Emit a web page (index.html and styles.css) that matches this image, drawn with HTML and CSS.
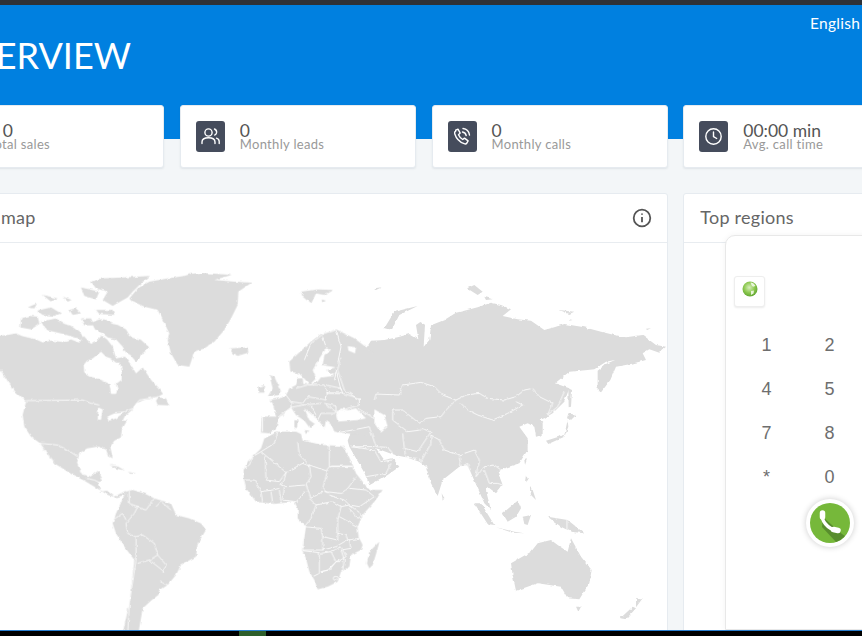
FILE: index.html
```html
<!DOCTYPE html>
<html lang="en">
<head>
<meta charset="utf-8">
<title>Overview</title>
<link rel="stylesheet" href="styles.css">
</head>
<body>
<div class="app">
  <div class="topbar"></div>
  <main class="main">
    <header class="hero">
      <h1 class="title">OVERVIEW</h1>
      <span class="lang">English</span>
    </header>
    <div class="grid">
      <section class="stat">
        <span class="tile"></span>
        <div class="stat-text"><div class="value">$ 0</div><div class="label">Total sales</div></div>
      </section>
      <section class="stat">
        <span class="tile"><svg class="ico" viewBox="0 0 29 31"><circle cx="12.5" cy="11.5" r="3.6"/><path d="M6 22.500v-1.500c0-2.800 2.500-4.200 6.500-4.200s6.500 1.400 6.500 4.200v1.500"/><path d="M18.500 8c1.800.8 2.300 2.200 2.100 3.700-.2 1.200-.9 2-1.900 2.400"/><path d="M20.500 17.200c1.700.6 2.700 1.800 2.700 3.300v2"/></svg></span>
        <div class="stat-text"><div class="value">0</div><div class="label">Monthly leads</div></div>
      </section>
      <section class="stat">
        <span class="tile"><svg class="ico" viewBox="0 0 29 31"><path d="M7.700 9.200l2.300-1 2.200 3.900-1.700 1.600c.8 2 2.300 3.700 4.200 4.800l1.800-1.400 3.600 2.800-1.200 2.100c-.6.900-1.700 1.100-2.700.7-4.600-1.700-8-5.200-9.500-10-.4-1.200 0-2 1-2.500z"/><path d="M14.500 11c2 .3 3.300 1.600 3.700 3.600"/><path d="M15 7.500c3.400.4 6 2.900 6.500 6.500"/></svg></span>
        <div class="stat-text"><div class="value">0</div><div class="label">Monthly calls</div></div>
      </section>
      <section class="stat">
        <span class="tile"><svg class="ico" viewBox="0 0 29 31"><circle cx="14.500" cy="15.500" r="7.700"/><path d="M14.500 11v4.700l3.200 1.800"/></svg></span>
        <div class="stat-text"><div class="value">00:00 min</div><div class="label">Avg. call time</div></div>
      </section>

      <section class="panel panel-wide">
        <div class="panel-head"><h2 class="panel-title">Traffic map</h2>
          <svg class="info" viewBox="0 0 20 20"><circle cx="10" cy="10" r="8.300"/><path d="M10 9v5.200"/><path d="M10 5.600v1.200"/></svg>
        </div>
        <svg class="map" viewBox="-216 729 2214 1161" aria-label="World map">
          <defs>
            <filter id="rough" x="-2%" y="-2%" width="104%" height="104%" filterUnits="objectBoundingBox">
              <feTurbulence type="fractalNoise" baseFrequency="0.07" numOctaves="2" seed="4" result="n"/>
              <feDisplacementMap in="SourceGraphic" in2="n" scale="9" xChannelSelector="R" yChannelSelector="G"/>
              <feGaussianBlur stdDeviation="0.9"/>
            </filter>
          </defs>
          <g filter="url(#rough)">
          <g class="land">
            <!-- North Atlantic and the Americas -->
            <g transform="translate(0 750)">
              <path d="M-10 258L20 255 45 250 62 258 80 262 105 268 125 277 150 272 185 276 210 268 235 278 248 258 270 282 288 272 302 256 318 268 335 290 345 325 372 320 390 345 405 370 425 352 440 375 452 392 472 412 486 432 462 445 430 450 405 460 395 478 372 498 365 512 378 512 362 540 360 562 340 572 328 590 335 625 322 618 315 598 290 590 258 595 235 610 228 640 242 672 268 680 292 662 305 690 290 700 300 725 318 722 340 740 375 722 372 735 345 742 320 735 300 722 250 692 210 672 185 655 160 640 130 600 118 580 90 560 70 530 65 495 75 455 45 430 20 395 0 365 -10 360z"/>
              <path d="M118 578L140 610 165 640 150 625 125 590z" class="sea"/>
              <path d="M248 345L258 332 275 325 300 305 315 320 330 325 345 338 357 338 362 360 362 390 345 402 350 418 345 432 330 432 325 402 305 392 290 385 265 380 250 370z" class="sea"/>
              <path d="M292 472L305 478 300 510 290 508zM318 500L340 490 368 488 345 505 325 512z" class="sea"/>
              <path d="M272 218L295 208 310 208 335 222 350 225 375 238 385 255 395 264 420 270 445 292 425 310 418 322 405 335 388 315 375 308 365 290 345 268 320 262 305 250 282 238z"/>
              <path d="M120 215L165 205 190 222 208 226 240 250 248 270 222 262 180 250 135 240z"/>
              <path d="M240 205L270 205 280 226 250 226z"/>
              <path d="M270 95L300 85 370 82 447 78 420 100 395 125 380 142 335 168 305 150 320 125 285 115z"/>
              <path d="M240 112L295 125 285 148 250 138z"/>
              <path d="M285 180L335 180 340 195 295 192z"/>
              <path d="M108 182L150 172 180 190 160 198 125 195z"/>
              <path d="M60 205L85 198 110 200 115 222 90 238 58 232z"/>
              <path d="M80 172L108 160 100 175zM205 180L225 175 240 190 215 195zM125 135L170 145 150 155zM185 140L212 150 200 155z"/>
              <path d="M385 145L410 115 445 95 500 85 550 78 570 72 600 68 692 75 640 90 700 95 752 98 712 125 710 165 700 185 690 205 670 240 640 275 610 295 580 305 565 350 530 345 510 310 500 270 505 250 495 230 470 180 430 170 390 152z"/>
              <path d="M685 295L740 292 742 308 710 318 695 310z"/>
              <path d="M900 125L950 118 995 120 970 135 945 130 930 162 905 140zM962 148L975 152 965 157z"/>
              <path d="M472 442L495 445 505 466 470 465 465 452z"/>
              <path d="M325 645L352 650 372 662 345 655zM380 665L405 670 392 672z"/>
              <path d="M335 820L345 790 375 725 395 720 430 730 460 745 510 760 525 795 565 805 600 820 615 840 590 880 585 920 540 945 525 975 500 1005 475 1022 472 1035 450 1052 425 1075 412 1150 365 1150 385 1060 400 930 370 890 345 850z"/>
            </g>
            <!-- Asia and Oceania -->
            <g transform="translate(990 750)">
              <path d="M10 340L40 262 65 265 90 290 60 312 90 315 110 288 120 272 160 270 200 262 235 252 262 268 255 225 268 216 282 224 278 290 295 270 300 226 340 210 375 188 400 182 440 172 480 158 510 165 540 178 515 198 560 208 600 212 640 240 670 232 700 222 760 232 810 245 850 255 885 262 935 255 975 285 1005 290 985 308 955 298 935 310 945 330 900 342 855 350 838 390 808 430 800 420 800 362 825 342 852 330 825 335 790 358 770 360 715 365 672 400 715 415 700 455 665 490 640 505 625 510 635 520 635 555 615 560 610 530 590 520 565 530 590 565 590 600 565 640 520 655 500 665 515 705 495 730 470 710 465 722 480 780 460 760 445 725 425 680 408 645 385 650 335 690 320 738 300 700 285 650 265 635 225 622 190 615 150 600 135 595 160 630 185 625 205 650 170 675 115 706 100 668 55 590 50 572 60 545 20 548 0 525 10 500 10 400z"/>
              <path d="M160 235L190 185 260 168 205 195 182 240zM408 115L430 105 455 125 440 135zM460 140L485 148 465 150zM685 180L730 185 715 192zM715 208L725 210 715 212zM130 115L152 112 135 120zM945 236L960 235 948 240z"/>
              <path d="M712 415L723 420 720 470 713 472zM712 490L735 495 720 510 708 505zM645 572L700 555 710 510 712 530 700 560 652 582zM622 540L634 540 630 560 620 555z"/>
              <path d="M332 730L340 745 335 752z"/>
              <path d="M430 760L450 760 490 825 470 822zM495 832L550 845 580 850 545 848zM515 790L560 752 570 775 555 800 530 815zM575 800L600 795 590 825 580 822zM650 800L710 810 760 850 720 845 690 830zM585 675L592 690 582 695zM596 710L605 720 615 750 600 735zM580 630L588 628 582 645z"/>
              <path d="M540 940L600 905 620 880 660 870 680 885 710 905 720 865 750 920 782 960 775 1000 745 1048 710 1045 690 1010 620 1000 555 1022 545 975z"/>
              <path d="M735 1070L750 1070 742 1085zM868 1105L905 1070 915 1075 885 1108zM915 1045L935 1045 915 1072z"/>
            </g>
            <!-- Europe -->
            <g transform="translate(720 960)">
              <path d="M145 125L210 65 240 42 285 28 340 55 400 100 400 345 335 342 280 335 272 315 255 300 250 325 235 305 225 295 190 265 205 300 222 312 205 322 190 302 165 285 150 262 125 285 115 290 105 325 85 340 60 338 62 290 105 290 95 250 85 240 115 235 135 225 145 205 165 195 170 175 185 175 187 192 205 192 180 165 170 160 148 155z"/>
              <path d="M85 165L100 170 120 215 115 225 80 230 95 205zM52 200L72 195 70 218 52 218zM160 300L170 302 168 325 160 322zM190 330L205 332 195 342z"/>
              <path d="M205 195L225 175 215 150 235 115 255 85 270 90 250 105 245 135 285 142 255 150 280 168 240 172 230 185z" class="sea"/>
              <path d="M285 285L300 265 320 270 345 265 375 295 350 300 290 305z" class="sea"/>
              <path d="M320 78L345 82 342 100 322 92z" class="sea"/>
            </g>
            <g transform="translate(990 750)"><path d="M130 478L160 495 170 530 150 548 130 520z" class="sea"/></g>
            <!-- Africa -->
            <g transform="translate(720 1290)">
              <path d="M8 120L20 95 60 55 70 25 110 5 165 5 180 12 185 32 215 38 240 45 300 48 312 55 335 105 345 130 375 168 390 180 425 180 400 215 365 255 350 290 355 325 365 345 360 360 330 375 325 410 300 425 290 455 260 470 230 478 220 450 205 425 195 385 183 360 190 320 195 290 170 265 170 235 160 215 100 222 65 218 45 215 15 175 8 145z"/>
              <path d="M415 335L410 355 395 405 385 415 378 400 385 365z"/>
            </g>
          </g>
          <g class="borders">
            <g transform="translate(0 750)">
              <path d="M0 362L20 395 45 430 75 455M75 452L245 450 270 460 295 465M320 510L350 495 395 475 415 450 445 445 470 440M115 580L170 585 200 600 230 620M255 685L280 690 300 700"/>
              <path d="M385 725L385 760 410 770 400 790 375 820M400 770L435 780 460 745M465 770L480 755 510 780M375 820L380 850 405 860 425 855 460 880 470 915 495 945 485 970M405 860L405 930 385 1060 380 1150M335 810L365 790 375 810M410 940L445 930 470 915M445 930L490 965M475 995L500 1005"/>
            </g>
            <g transform="translate(990 750)">
              <path d="M85 450L40 420 30 390 20 360 30 320M130 450L135 432 205 435 215 405 270 397 310 410 335 435 375 450 405 435 445 430 470 445 520 450 555 440 580 420 605 415 625 440 665 460 650 495 680 470 700 425M390 460L410 480 440 495 485 510 530 490 575 465 555 455M375 450L345 480 330 500 285 505 265 520M185 480L215 480 240 500 265 520M185 480L185 510 230 545 270 540M215 550L220 595 260 605 300 545 270 535M115 530L135 590 170 592 190 615M225 622L220 595M225 622L260 625 270 635 300 580 300 555 325 570 340 600 385 615 430 600 445 630M385 620L390 650 410 640 420 680M445 630L435 680 460 650 490 645 510 660M460 660L475 700 500 700 515 705M115 530L65 540 20 548M130 590L100 590 60 590M60 590L130 600 150 635 185 630M105 680L165 670 180 640M0 648L65 648M708 810L708 845"/>
            </g>
            <g transform="translate(720 960)">
              <path d="M190 120L210 70 250 40 285 30M245 50L255 80M285 30L300 80 290 130M245 170L285 160 280 180M285 150L300 210M200 195L250 195 260 215 255 240 200 230M165 205L200 195M200 230L185 250 150 245M135 225L150 245 150 265M65 290L65 335M255 195L300 205 305 220 255 218M260 220L305 220 355 235 355 255 320 265 285 275 255 255M250 250L285 258 285 280 240 280M185 255L240 250M240 280L230 300 200 270M210 258L225 285M350 265L400 295M150 262L185 255M115 288L148 264"/>
            </g>
            <g transform="translate(720 1290)">
              <path d="M60 65L100 40 110 5M60 65L35 80 25 105 10 115M72 80L75 150 115 155 135 127M60 65L135 127 185 100 205 108M170 35L175 75 205 105M205 105L255 122 265 110 265 45M265 110L335 110M260 120L245 175 260 190M205 105L210 140 195 165 205 190 210 205 245 185M135 127L130 150 120 165 135 170 190 165M130 170L125 210 165 215 195 185M10 150L40 150 60 185 95 180 115 175M60 185L65 218M90 185L95 220M115 180L120 215M250 185L300 190 320 175 335 155 345 140M265 195L310 210 325 225M325 175L375 180 400 200 355 230 325 225M205 205L225 225 275 215 300 230M225 225L210 265 190 290 240 295 245 320 290 330 290 270 300 230M300 230L325 225 365 255 350 265 325 235M295 260L350 290 355 325 320 330 315 315 290 310M190 290L185 360 245 360 245 320M245 360L285 350 310 335 325 330M325 330L330 355 300 360 310 390 305 420M185 362L235 368 235 430 215 440M240 370L270 365 285 395 260 420 240 425M270 365L300 350 315 380 285 395M240 425L265 420 285 395 305 395"/>
              <circle cx="283" cy="445" r="6"/>
            </g>
          </g>
          </g>
        </svg>
      </section>
      <section class="panel">
        <div class="panel-head"><h2 class="panel-title">Top regions</h2></div>
      </section>
    </div>
  </main>
  <div class="taskbar"><span class="task-item"></span></div>

  <aside class="dialer">
    <button class="globe-btn" type="button">
      <svg class="globe" viewBox="0 0 16 16"><defs><radialGradient id="gl" cx="45%" cy="40%" r="65%"><stop offset="0" stop-color="#d8eebc"/><stop offset=".55" stop-color="#8cc84f"/><stop offset="1" stop-color="#5aa02c"/></radialGradient></defs><circle cx="8" cy="8" r="7.500" fill="url(#gl)"/><path d="M8.500 1.500c2.500.2 4 1.500 5 3.500l-2.500.8-1.500-1.500zM9 10l3-.5-.5 3-2.500 1.500z" fill="#e9f5da"/></svg>
    </button>
    <div class="keys">
      <span class="key">1</span><span class="key">2</span><span class="key">3</span>
      <span class="key">4</span><span class="key">5</span><span class="key">6</span>
      <span class="key">7</span><span class="key">8</span><span class="key">9</span>
      <span class="key">*</span><span class="key">0</span><span class="key">#</span>
    </div>
    <button class="call" type="button">
      <svg class="call-ico" viewBox="0 0 40 40"><circle cx="20" cy="20" r="20" fill="#76b83a"/><path d="M13 14L32 31 35 33A20 20 0 0 1 26 39L12 24z" fill="#4f7f2a" opacity=".75"/><path d="M12.500 11C11 17 17 26 27 27.500" fill="none" stroke="#fff" stroke-width="3.400" stroke-linecap="round"/><path d="M12.500 10v4M23.500 26.500l4.500 1" fill="none" stroke="#fff" stroke-width="5.500" stroke-linecap="round"/></svg>
    </button>
  </aside>
</div>
</body>
</html>
```
FILE: styles.css
```css
* { box-sizing: border-box; }
html, body { margin: 0; height: 100%; overflow: hidden; }
body { background: #f3f6f8; font-family: "Lato", "Open Sans", sans-serif; color: #555; }
.app { position: relative; width: 862px; height: 636px; display: flex; flex-direction: column; overflow: hidden; }
.topbar { height: 5px; flex: none; background: #2f3237; }
.main { flex: 1; min-height: 0; overflow: hidden; background: #f3f6f8; }
.hero { height: 134px; background: #0080e0; color: #fff; position: relative; }
.title { margin: 0; position: absolute; right: 731px; top: 28px; font-size: 36px; line-height: 44px; font-weight: 400; white-space: nowrap; }
.lang { position: absolute; left: 810px; top: 9px; font-size: 15.500px; line-height: 18px; letter-spacing: .3px; }
.grid { position: relative; margin: -34px 0 0 -72px; display: grid; grid-template-columns: repeat(4, 236px); column-gap: 15.750px; row-gap: 25px; grid-template-rows: 63px 500px; }
.stat { background: #fff; border: 1px solid #e6ebf0; border-radius: 3px; box-shadow: 0 1px 2px rgba(60,80,100,.1); display: flex; align-items: center; gap: 15px; padding-left: 15px; }
.tile { flex: none; width: 29px; height: 31px; border-radius: 3px; background: #454c5c; display: block; }
.ico { display: block; width: 29px; height: 31px; fill: none; stroke: #fff; stroke-width: 1.400; stroke-linecap: round; stroke-linejoin: round; }
.value { font-size: 17.500px; line-height: 17px; color: #555; }
.label { font-size: 13px; line-height: 13px; color: #999; letter-spacing: .32px; margin-top: -1px; }
.panel { background: #fff; border: 1px solid #e6ebf0; border-radius: 3px; overflow: hidden; }
.panel-wide { grid-column: span 3; }
.panel-head { height: 49px; border-bottom: 1px solid #e8ecf0; display: flex; align-items: center; justify-content: space-between; padding: 0 15px 2px 16px; }
.panel-title { margin: 0; font-size: 18px; font-weight: 400; color: #666; letter-spacing: .25px; white-space: nowrap; }
.info { width: 20px; height: 20px; margin-top: 2px; fill: none; stroke: #555; stroke-width: 1.800; }
.map { display: block; width: 738px; height: 387px; }
.land { fill: #dcdcdc; }
.sea { fill: #fff; }
.borders { fill: none; stroke: #fff; stroke-width: 2.500; stroke-linejoin: round; }
.taskbar { height: 6px; flex: none; background: #000; border-top: 1.500px solid #2a7fd0; display: flex; padding-left: 239px; }
.task-item { width: 27px; background: #2e5e2a; }
.dialer { position: absolute; left: 725px; top: 235px; width: 220px; height: 395px; background: #fff; border: 1px solid #e8e8e8; border-radius: 10px 10px 0 0; box-shadow: 0 0 6px rgba(0,0,0,.05); padding: 40px 0 0 8px; font-family: "Liberation Sans", Arial, sans-serif; }
.globe-btn { display: flex; justify-content: center; align-items: flex-start; width: 31px; height: 31px; padding: 4px 0 0; background: #fff; border: 1px solid #eee; border-radius: 3px; box-shadow: 0 1px 2px rgba(0,0,0,.08); }
.globe { display: block; width: 16px; height: 16px; }
.keys { display: grid; grid-template-columns: repeat(3, 63px); grid-auto-rows: 44px; margin: 16px 0 0 1px; }
.key { display: flex; align-items: center; justify-content: center; font-size: 18px; color: #6e6e6e; }
.call { display: block; width: 48px; height: 48px; margin: 0 0 0 72px; padding: 4px; background: #fff; border: 0; border-radius: 50%; box-shadow: 0 0 6px rgba(0,0,0,.2); }
.call-ico { display: block; width: 40px; height: 40px; }
```
